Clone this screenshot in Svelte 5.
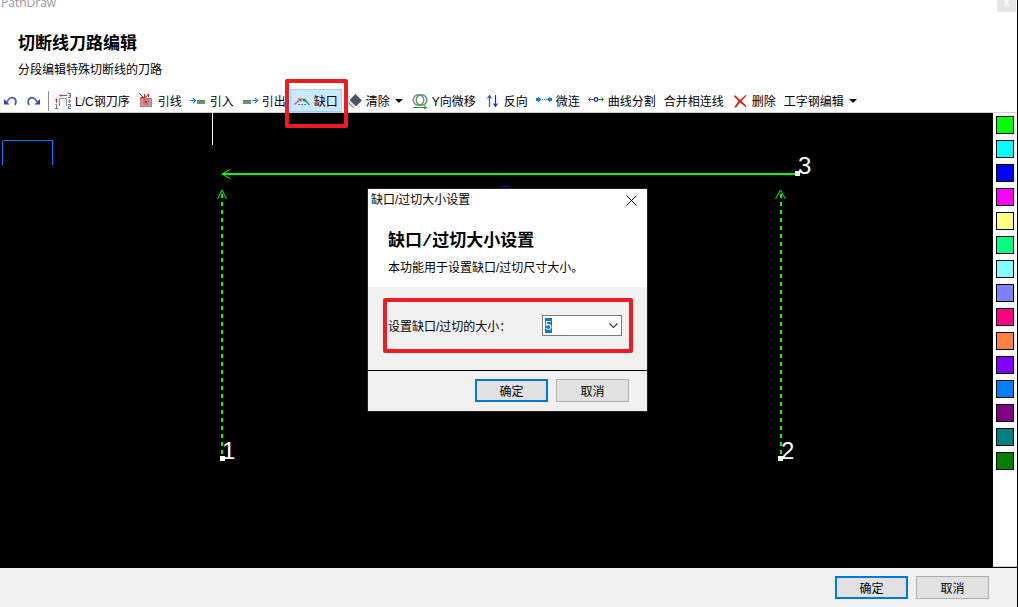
<script>
  // Toolbar entries in display order; `icon` picks a drawing from the snippet below.
  const tools = [
    { icon: 'order', label: 'L/C钢刀序' },
    { icon: 'lead', label: '引线' },
    { icon: 'leadIn', label: '引入' },
    { icon: 'leadOut', label: '引出' },
    { icon: 'notch', label: '缺口', marked: true },
    { icon: 'eraser', label: '清除', caret: true },
    { icon: 'shift', label: 'Y向微移' },
    { icon: 'reverse', label: '反向' },
    { icon: 'micro', label: '微连' },
    { icon: 'split', label: '曲线分割' },
    { label: '合并相连线' },
    { icon: 'remove', label: '删除' },
    { label: '工字钢编辑', caret: true },
  ];

  const colors = [
    '#00ff00', '#00ffff', '#0000ff', '#ff00ff', '#ffff80',
    '#00ff80', '#80ffff', '#8080ff', '#ff0080', '#ff8040',
    '#8000ff', '#0080ff', '#800080', '#008080', '#008000',
  ];

  let active = $state('缺口');
  let color = $state(colors[0]);
  let size = $state('5');
  let dialogOpen = $state(true);

  function pick(tool) {
    active = tool.label;
    if (tool.marked) dialogOpen = true;
  }

  function closeDialog() { dialogOpen = false; }
</script>

{#snippet glyph(name)}
  <svg class="icon" viewBox="0 0 16 16" aria-hidden="true">
    {#if name === 'undo'}
      <path d="M4 9C5.500 5 9 3.500 11.500 5.500C13.500 7.500 13 10 12 12" fill="none" stroke="#4a5ab4" stroke-width="1.800" />
      <path d="M1 6V11.500H6.500Z" fill="#2c46b8" />
    {:else if name === 'redo'}
      <path d="M10 9C8.500 5 5 3.500 2.500 5.500C0.500 7.500 1 10 2 12" fill="none" stroke="#4a5ab4" stroke-width="1.800" />
      <path d="M13 6V11.500H7.500Z" fill="#2c46b8" />
    {:else if name === 'order'}
      <path d="M4.500 13V5.500H11.500V13" fill="none" stroke="#8296a0" />
      <path d="M1.500 10V6M5 2.500H12M14.500 10V7" fill="none" stroke="#c83c3c" />
      <path d="M0 7.500L1.500 5L3 7.500ZM6.500 1L4 2.500L6.500 4ZM13 8.500L14.500 6L16 8.500Z" fill="#c83c3c" />
      <path d="M0.500 11.500H1.500V15.500M0 15.500H3M13 11.500H15.500V13.500H13.500V15.500H16M13 0.500H15.500V4.500H13M14 2.500H15.500" fill="none" stroke="#607484" />
    {:else if name === 'lead'}
      <rect x="2.500" y="5.500" width="11" height="8" fill="#d69a9a" stroke="#b87878" />
      <rect x="5" y="6" width="6" height="6" fill="#c07878" />
      <rect x="7" y="8" width="2" height="2" fill="#8c4a4a" />
      <path d="M1.500 0.500L5.500 4.500M6.500 1V4.500H2.500M6 4.500L8 4L10.500 1V4" fill="none" stroke="#dc1414" />
    {:else if name === 'leadIn'}
      <path d="M0 7.500H5M3 5L5.500 7.500L3 10" fill="none" stroke="#2878e6" stroke-width="1.200" />
      <rect x="7" y="7" width="8" height="4" fill="#808488" />
      <rect x="7" y="7" width="8" height="1" fill="#14b414" />
    {:else if name === 'leadOut'}
      <rect x="1" y="7" width="8" height="4" fill="#808488" />
      <rect x="1" y="7" width="8" height="1" fill="#14b414" />
      <path d="M10 7.500H15M13 5L15.500 7.500L13 10" fill="none" stroke="#2878e6" stroke-width="1.200" />
    {:else if name === 'notch'}
      <path d="M0.500 11.500L5.500 7" fill="none" stroke="#c85050" stroke-width="1.200" />
      <path d="M3.500 5.500H7.500V9Z" fill="#c83c3c" />
      <path d="M11 7L15.500 12" fill="none" stroke="#1e9646" stroke-width="1.200" />
      <path d="M8 5.500H11L13 9.500L9 8Z" fill="#1e9646" />
      <path d="M4 11.500H13" fill="none" stroke="#1e82dc" stroke-dasharray="2 1" />
    {:else if name === 'eraser'}
      <path d="M9.500 1L16 7.500L10 13.500L3.500 7Z" fill="#4b5563" />
      <path d="M3.500 8L9 13.500L7 15.500L2 10.500Z" fill="#f0eaea" stroke="#b4b4b4" stroke-width="0.600" />
      <path d="M3 10L7.500 14.500" stroke="#d25050" />
    {:else if name === 'shift'}
      <circle cx="6.500" cy="7" r="5.300" fill="none" stroke="#7d858a" stroke-width="1.500" />
      <circle cx="9.500" cy="7" r="5.300" fill="none" stroke="#56965a" stroke-width="1.500" />
      <path d="M1 14.500H14M12 12.500L14.500 14.500L12 16" fill="none" stroke="#148c28" />
    {:else if name === 'reverse'}
      <path d="M5.500 14V3M3.500 5.500L5.500 2.500L7.500 5.500" fill="none" stroke="#1464a0" stroke-width="1.200" />
      <path d="M11.500 2V13M9.500 10.500L11.500 13.500L13.500 10.500" fill="none" stroke="#1428e6" stroke-width="1.200" />
    {:else if name === 'micro'}
      <path d="M0 6.500H4M12 6.500H16" stroke="#1478dc" stroke-width="3" />
      <path d="M2 3.500L5.500 6.500L2 9.500ZM14 3.500L11 6.500L14 9.500Z" fill="#1478dc" />
      <path d="M6 6.500H11" stroke="#1478dc" stroke-dasharray="1 1" />
    {:else if name === 'split'}
      <path d="M1 6.500H6M2.500 4.500L0.500 6.500L2.500 8.500" fill="none" stroke="#505050" />
      <path d="M10 6.500H15M13.500 4.500L15.500 6.500L13.500 8.500" fill="none" stroke="#148232" />
      <circle cx="8" cy="6.500" r="1.800" fill="#fff" stroke="#1414dc" stroke-width="1.200" />
    {:else if name === 'remove'}
      <path d="M3 2L8 7L13.500 2L14.500 2.500L9.500 8L14.500 13L13.500 14L8 9.500L4 14.500L2 14.500L6.500 8L2 3.500Z" fill="#dc1e0a" />
    {/if}
  </svg>
{/snippet}

<main class="window">
  <div class="titlebar">
    <span class="app-name">PathDraw</span>
    <button class="window-close" aria-label="关闭">x</button>
  </div>

  <header class="intro">
    <h1>切断线刀路编辑</h1>
    <p>分段编辑特殊切断线的刀路</p>
  </header>

  <div class="toolbar" role="toolbar">
    <button class="tool history" aria-label="撤销">{@render glyph('undo')}</button>
    <button class="tool history" aria-label="重做">{@render glyph('redo')}</button>
    <span class="divider"></span>
    {#each tools as tool}
      <button class="tool" class:active={active === tool.label} onclick={() => pick(tool)}>
        {#if tool.icon}{@render glyph(tool.icon)}{/if}
        <span class="tool-label">{tool.label}</span>
        {#if tool.caret}<i class="caret"></i>{/if}
        {#if tool.marked}<span class="mark"></span>{/if}
      </button>
    {/each}
  </div>

  <div class="workspace">
    <svg class="canvas" aria-hidden="true">
      <path d="M212.500 0V32" stroke="#fff" />
      <path d="M2.500 52V28M3 27.500H53M52.500 28V52" stroke="#0080ff" fill="none" />
      <path d="M501 73.500H510" stroke="#00f" />

      <!-- cutting paths: dashed legs 1 and 2, solid top 3 -->
      <g stroke="#0f0" fill="none">
        <path d="M222 61H797" stroke-width="2" />
        <path d="M230 56.500L222 61L230.500 65.500" />
        <path d="M222 81V345" stroke-width="2" stroke-dasharray="4 4" />
        <path d="M217.500 86L222 77L226.500 86" />
        <path d="M781 81V345" stroke-width="2" stroke-dasharray="4 4" />
        <path d="M775.500 86L780.500 77L785.500 86" />
      </g>
      <g fill="#fff">
        <rect x="220" y="343" width="5" height="5" />
        <rect x="778" y="343" width="5" height="5" />
        <rect x="795" y="58" width="5" height="5" />
        <text x="222" y="346">1</text>
        <text x="781" y="346">2</text>
        <text x="798" y="61">3</text>
      </g>
    </svg>

    <div class="palette">
      {#each colors as c}
        <button class="swatch" style="background: {c};" aria-label={c} aria-pressed={color === c} onclick={() => { color = c; }}></button>
      {/each}
    </div>
  </div>

  <footer class="actions">
    <button class="btn primary">确定</button>
    <button class="btn">取消</button>
  </footer>

  {#if dialogOpen}
    <div class="dialog" role="dialog" aria-labelledby="dialog-title">
      <div class="dialog-bar">
        <span id="dialog-title">缺口/过切大小设置</span>
        <button class="dialog-close" aria-label="关闭" onclick={closeDialog}>
          <svg viewBox="0 0 11 11" aria-hidden="true"><path d="M0.500 0.500L10.500 10.500M10.500 0.500L0.500 10.500" stroke="#000" /></svg>
        </button>
      </div>
      <div class="dialog-intro">
        <h2>缺口/过切大小设置</h2>
        <p>本功能用于设置缺口/过切尺寸大小。</p>
      </div>
      <div class="dialog-body">
        <div class="field">
          <label for="notch-size">设置缺口/过切的大小：</label>
          <span class="combo">
            <select id="notch-size" bind:value={size}>
              <option value="5">5</option>
            </select>
            <svg viewBox="0 0 9 6" aria-hidden="true"><path d="M0.500 0.500L4.500 4.500L8.500 0.500" fill="none" stroke="#404040" stroke-width="1.200" /></svg>
          </span>
        </div>
      </div>
      <div class="dialog-actions">
        <button class="btn primary" onclick={closeDialog}>确定</button>
        <button class="btn" onclick={closeDialog}>取消</button>
      </div>
    </div>
  {/if}
</main>

<style>
  :global(body) {
    background: #fff;
  }

  .window {
    position: relative;
    display: flex;
    flex-direction: column;
    min-height: 100vh;
    box-sizing: border-box;
    border-right: 1px solid #000;
    overflow: hidden;
    background: #fff;
    color: #000;
    font-family: "Liberation Sans", "Noto Sans CJK SC", sans-serif;
    font-size: 12px;
  }

  button {
    font: inherit;
    color: inherit;
    cursor: pointer;
  }

  h1, h2, p {
    margin: 0;
  }

  h1, h2 {
    font-size: 17px;
    line-height: 24px;
    font-weight: bold;
  }

  p {
    margin-top: 5px;
    line-height: 18px;
  }

  .titlebar {
    display: flex;
    justify-content: space-between;
    height: 12px;
    padding: 0 1px;
  }

  .app-name {
    font-family: "Open Sans", sans-serif;
    line-height: 6px;
    color: #999;
  }

  .window-close {
    width: 19px;
    padding: 0;
    border: none;
    background: #e5e5e5;
    color: #f8f8f8;
    font-weight: bold;
    line-height: 4px;
    display: flex;
    justify-content: center;
  }

  .intro {
    padding: 20px 18px 10px;
  }

  .toolbar {
    display: flex;
    height: 23px;
    border-bottom: 1px solid #d0d0d0;
  }

  .tool {
    position: relative;
    display: flex;
    align-items: center;
    gap: 4px;
    padding: 1px 4px 0;
    border: none;
    background: none;
    white-space: nowrap;
    line-height: 18px;
  }

  .tool.history {
    padding: 1px 5px 0 3px;
  }

  .tool.active {
    background: #cce8ff;
    box-shadow: inset 0 0 0 1px #99d1ff;
  }

  .tool-label {
    padding-top: 2px;
  }

  .icon {
    width: 16px;
    height: 16px;
    flex-shrink: 0;
  }

  .divider {
    width: 1px;
    height: 20px;
    margin: 2px 2px 0 0;
    background: #8c8c8c;
  }

  .caret {
    border: 4px solid transparent;
    border-top-color: #000;
    border-bottom: none;
    margin: 0 1px;
  }

  /* Red frame drawing attention to the notch tool */
  .mark {
    position: absolute;
    inset: -10px -6px -16px -5px;
    border: 4px solid #ed1c24;
    border-radius: 2px;
    pointer-events: none;
    z-index: 1;
  }

  .workspace {
    display: flex;
    flex: 1;
    min-height: 0;
    background: #000;
  }

  .canvas {
    flex: 1;
    min-width: 0;
    height: auto;
  }

  .canvas text {
    font-size: 24px;
  }

  .palette {
    display: flex;
    flex-direction: column;
    gap: 6px;
    padding: 3px;
    background: #fff;
    border-bottom: 1px solid #d0d0d0;
  }

  .swatch {
    width: 18px;
    height: 18px;
    padding: 0;
    border: 1px solid #000;
  }

  .actions {
    display: flex;
    justify-content: flex-end;
    gap: 8px;
    padding: 8px 28px 8px 8px;
    border-top: 1px solid #000;
    background: #f0f0f0;
  }

  .btn {
    width: 73px;
    height: 23px;
    padding: 2px 0 0;
    border: 1px solid #adadad;
    background: #e1e1e1;
    line-height: 18px;
  }

  .btn.primary {
    border: 2px solid #0078d7;
  }

  .dialog {
    position: absolute;
    left: 368px;
    top: 189px;
    width: 279px;
    background: #f0f0f0;
    box-shadow: 0 0 0 1px #222;
    z-index: 2;
  }

  .dialog-bar {
    display: flex;
    align-items: center;
    justify-content: space-between;
    box-sizing: border-box;
    height: 24px;
    padding: 0 10px 1px 3px;
    background: #fff;
    line-height: 17px;
  }

  .dialog-close {
    display: flex;
    padding: 0;
    border: none;
    background: none;
  }

  .dialog-close svg {
    width: 11px;
    height: 11px;
  }

  .dialog-intro {
    padding: 17px 20px 10px;
    background: #fff;
  }

  /* wide slash between the two terms */
  .dialog-intro h2 {
    font-family: "Liberation Mono", "Noto Sans CJK SC", monospace;
  }

  .dialog-body {
    padding: 11px 14px 17px 15px;
  }

  .field {
    display: flex;
    align-items: center;
    justify-content: space-between;
    box-sizing: border-box;
    height: 55px;
    padding: 0 7px 0 1px;
    border: 4px solid #ed1c24;
    border-radius: 2px;
  }

  .combo {
    position: relative;
    display: flex;
  }

  .combo select {
    width: 80px;
    height: 21px;
    padding: 0 2px;
    border: 1px solid #7a7a7a;
    border-radius: 0;
    appearance: none;
    /* selected value is shown as highlighted text */
    background: linear-gradient(#0078d7, #0078d7) 2px 2px / 7px 15px no-repeat #fff;
    color: #fff;
    font: inherit;
  }

  .combo option {
    color: #000;
  }

  .combo svg {
    position: absolute;
    right: 4px;
    top: 8px;
    width: 9px;
    height: 6px;
    pointer-events: none;
  }

  .dialog-actions {
    display: flex;
    justify-content: flex-end;
    gap: 8px;
    padding: 8px 18px 9px;
    border-top: 1px solid #000;
  }
</style>
